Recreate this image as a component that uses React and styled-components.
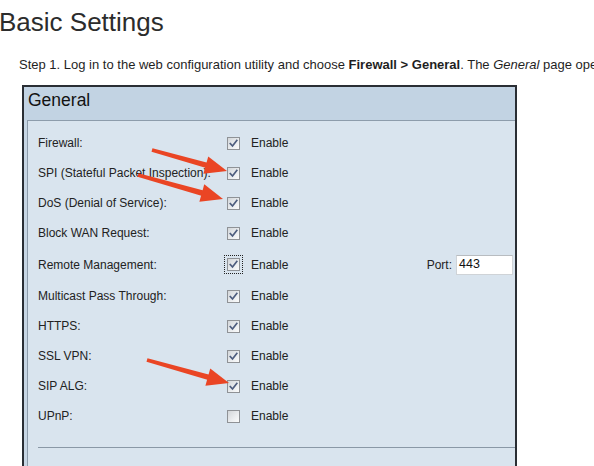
import React from "react";
import styled, { createGlobalStyle, css } from "styled-components";

const GlobalStyle = createGlobalStyle`
  html, body { margin: 0; padding: 0; background: #ffffff; overflow: hidden; }
  body { font-family: "Liberation Sans", Arial, sans-serif; }
`;

const Page = styled.div`
  position: relative;
  width: 594px;
  height: 466px;
  overflow: hidden;
  padding-top: 7px;
  box-sizing: border-box;
`;

const Title = styled.h1`
  margin: 0 0 0 -1px;
  font-size: 26px;
  line-height: 30px;
  font-weight: 400;
  color: #2c2c2c;
`;

const Intro = styled.p`
  margin: 20px 0 0 19px;
  font-size: 13px;
  line-height: 16px;
  white-space: nowrap;
  color: #1f1f1f;
`;

const Panel = styled.section`
  margin: 12px 0 0 22px;
  width: 495px;
  border: 2px solid #2a2e34;
  border-bottom: none;
  box-sizing: border-box;
`;

const PanelHeader = styled.div`
  height: 33px;
  box-sizing: border-box;
  padding: 3px 0 0 4px;
  background: #c2d3e3;
  font-size: 17.5px;
  line-height: 20px;
  color: #121212;
`;

const PanelFrame = styled.div`
  background: #c7d6e4;
  padding-left: 3px;
`;

const PanelBody = styled.div`
  background: #d9e4ee;
  border-left: 1px solid #8d9cab;
  border-top: 1px solid #8d9cab;
  padding: 7px 0 30px 10px;
  display: flex;
  flex-direction: column;
`;

const Row = styled.div`
  display: flex;
  align-items: center;
  height: ${(p) => (p.$tall ? 33 : 30)}px;
  font-size: 12px;
  color: #222;
  padding-right: 2px;
`;

const Label = styled.span`
  width: 189px;
  flex: none;
  white-space: nowrap;
`;

const Box = styled.span`
  display: inline-flex;
  align-items: center;
  justify-content: center;
  width: 13px;
  height: 13px;
  box-sizing: border-box;
  border: 1px solid #8f9296;
  background: linear-gradient(135deg, #d3d6d9 0%, #eceef0 60%, #fbfbfb 100%);
  margin-right: 11px;
  flex: none;
  ${(p) =>
    p.$focus &&
    css`
      outline: 1px dotted #222;
      outline-offset: 2px;
    `}
`;

const Enable = styled.span`
  white-space: nowrap;
`;

const PortGroup = styled.div`
  margin-left: auto;
  display: flex;
  align-items: center;
  gap: 4px;
`;

const PortInput = styled.div`
  width: 57px;
  height: 20px;
  box-sizing: border-box;
  background: #ffffff;
  border: 1px solid #cfd3d7;
  border-top-color: #b8bcc0;
  padding: 1px 0 0 2px;
  font-size: 12.5px;
  line-height: 14px;
  color: #111;
`;

const Separator = styled.div`
  margin-top: 16px;
  border-top: 1px solid #8a98a6;
`;

const Overlay = styled.svg`
  position: absolute;
  left: 0;
  top: 0;
  pointer-events: none;
`;

function Check({ checked, focus }) {
  return (
    <Box $focus={focus}>
      {checked && (
        <svg width="9" height="9" viewBox="0 0 9 9">
          <path d="M1.3 4.6 L3.5 7 L7.8 1.4" fill="none" stroke="#4e5d7e" strokeWidth="1.7" strokeLinecap="square" />
        </svg>
      )}
    </Box>
  );
}

const rows = [
  { label: "Firewall:", checked: true },
  { label: "SPI (Stateful Packet Inspection):", checked: true },
  { label: "DoS (Denial of Service):", checked: true },
  { label: "Block WAN Request:", checked: true },
  { label: "Remote Management:", checked: true, focus: true, port: "443" },
  { label: "Multicast Pass Through:", checked: true },
  { label: "HTTPS:", checked: true },
  { label: "SSL VPN:", checked: true },
  { label: "SIP ALG:", checked: true },
  { label: "UPnP:", checked: false },
];

const arrows = [
  { from: [152, 150], to: [227, 171] },
  { from: [138, 175], to: [223, 199] },
  { from: [147, 360], to: [229, 383] },
];

function Arrow({ from, to }) {
  const dx = to[0] - from[0];
  const dy = to[1] - from[1];
  const len = Math.hypot(dx, dy);
  const ux = dx / len;
  const uy = dy / len;
  const px = -uy;
  const py = ux;
  const head = 22;
  const half = 9;
  const bx = to[0] - ux * head;
  const by = to[1] - uy * head;
  const shaftEnd = [bx + ux * 2, by + uy * 2];
  const s0 = 1.8;
  const s1 = 2.8;
  const shaft = [
    [from[0] + px * s0, from[1] + py * s0],
    [shaftEnd[0] + px * s1, shaftEnd[1] + py * s1],
    [shaftEnd[0] - px * s1, shaftEnd[1] - py * s1],
    [from[0] - px * s0, from[1] - py * s0],
  ];
  const tri = [
    to,
    [bx + px * half, by + py * half],
    [bx - px * half, by - py * half],
  ];
  const pts = (a) => a.map((p) => p.join(",")).join(" ");
  return (
    <g fill="#ea4524">
      <polygon points={pts(shaft)} />
      <polygon points={pts(tri)} />
    </g>
  );
}

export default function App() {
  return (
    <>
      <GlobalStyle />
      <Page>
        <Title>Basic Settings</Title>
        <Intro>
          Step 1. Log in to the web configuration utility and choose <b>Firewall &gt; General</b>. The{" "}
          <i>General</i> page opens:
        </Intro>
        <Panel>
          <PanelHeader>General</PanelHeader>
          <PanelFrame>
            <PanelBody>
              {rows.map((r) => (
                <Row key={r.label} $tall={!!r.port}>
                  <Label>{r.label}</Label>
                  <Check checked={r.checked} focus={r.focus} />
                  <Enable>Enable</Enable>
                  {r.port && (
                    <PortGroup>
                      <span>Port:</span>
                      <PortInput>{r.port}</PortInput>
                    </PortGroup>
                  )}
                </Row>
              ))}
              <Separator />
            </PanelBody>
          </PanelFrame>
        </Panel>
        <Overlay width="594" height="466" viewBox="0 0 594 466">
          {arrows.map((a, i) => (
            <Arrow key={i} from={a.from} to={a.to} />
          ))}
        </Overlay>
      </Page>
    </>
  );
}
